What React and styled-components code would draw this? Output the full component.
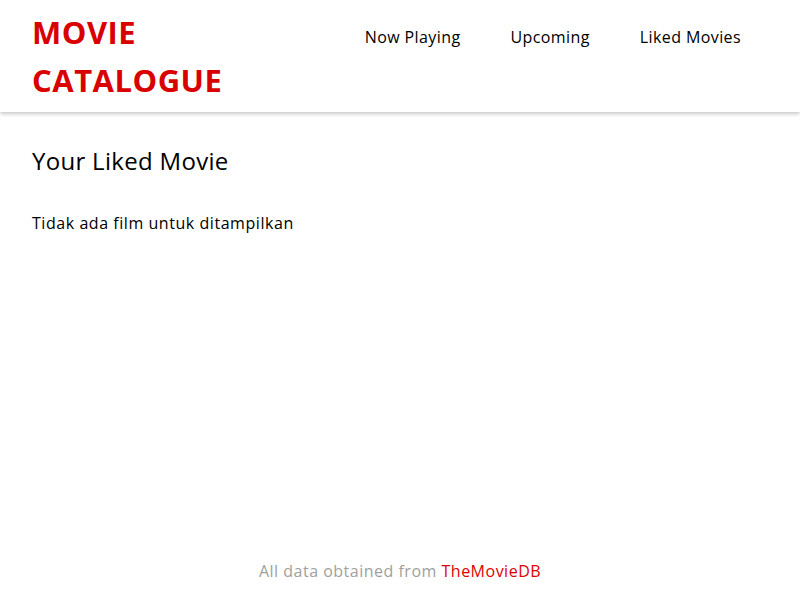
import React from "react";
import styled, { createGlobalStyle } from "styled-components";

const GlobalStyle = createGlobalStyle`
  html, body { margin: 0; padding: 0; background: #ffffff; }
  body { font-family: "Open Sans", "Liberation Sans", sans-serif; color: #000; }
  #root { min-height: 600px; display: flex; flex-direction: column; }
`;

const Header = styled.header`
  display: flex;
  justify-content: space-between;
  align-items: flex-start;
  height: 112px;
  box-sizing: border-box;
  padding: 0 59px 0 32px;
  box-shadow: 0 2px 4px rgba(0, 0, 0, 0.22);
`;

const Brand = styled.h1`
  margin: 0;
  padding-top: 8px;
  width: 240px;
  font-size: 31px;
  font-weight: 700;
  line-height: 48px;
  letter-spacing: 0.5px;
  color: #d90000;
`;

const Nav = styled.nav`
  display: flex;
  gap: 50px;
  padding-top: 25px;
`;

const NavLink = styled.a`
  font-size: 16px;
  line-height: 24px;
  color: #000;
  text-decoration: none;
  letter-spacing: 0.4px;
`;

const Main = styled.main`
  flex: 1;
  padding: 0 32px;
`;

const Heading = styled.h2`
  margin: 33px 0 0;
  font-size: 24px;
  font-weight: 400;
  line-height: 32px;
  letter-spacing: 0.3px;
`;

const Empty = styled.p`
  margin: 34px 0 0;
  font-size: 16px;
  line-height: 24px;
  letter-spacing: 0.55px;
`;

const Footer = styled.footer`
  text-align: center;
  font-size: 16px;
  line-height: 24px;
  letter-spacing: 0.5px;
  color: #a0a0a0;
  padding-bottom: 17px;
`;

const Credit = styled.a`
  color: #e00000;
  text-decoration: none;
`;

export default function App() {
  return (
    <>
      <GlobalStyle />
      <Header>
        <Brand>MOVIE CATALOGUE</Brand>
        <Nav>
          <NavLink href="#">Now Playing</NavLink>
          <NavLink href="#">Upcoming</NavLink>
          <NavLink href="#">Liked Movies</NavLink>
        </Nav>
      </Header>
      <Main>
        <Heading>Your Liked Movie</Heading>
        <Empty>Tidak ada film untuk ditampilkan</Empty>
      </Main>
      <Footer>
        All data obtained from <Credit href="#">TheMovieDB</Credit>
      </Footer>
    </>
  );
}
